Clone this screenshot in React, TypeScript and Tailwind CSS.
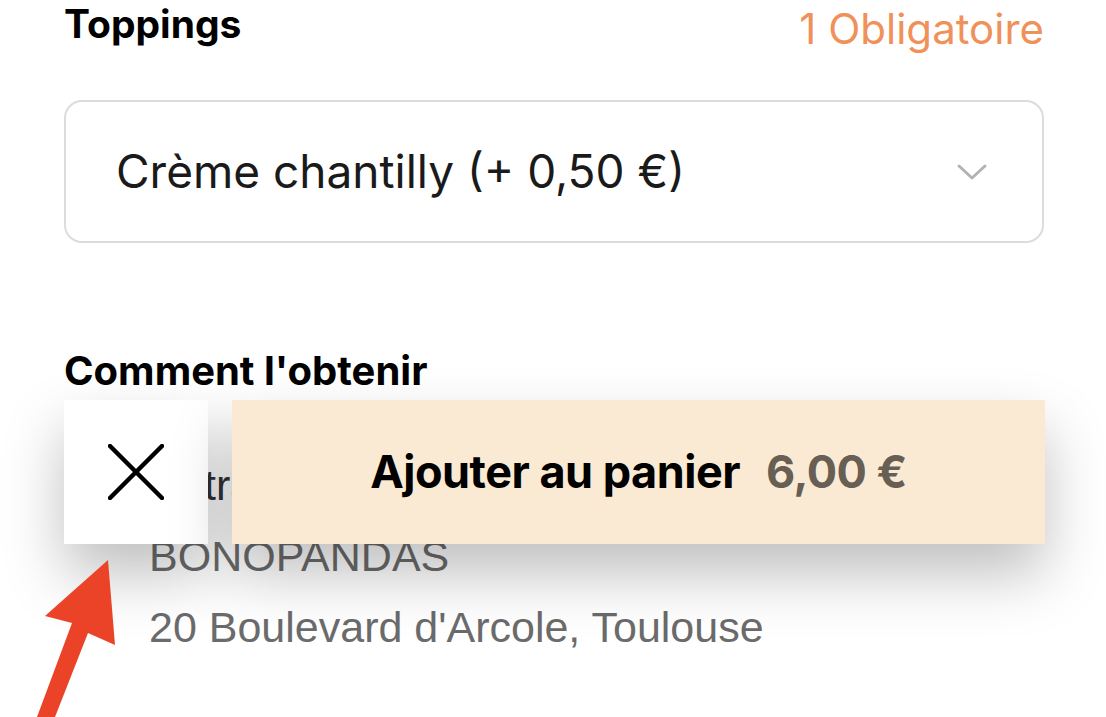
import React from "react";

const Chevron = () => (
  <svg width="32" height="20" viewBox="0 0 32 20" fill="none" stroke="#b3b3b3" strokeWidth="3" strokeLinecap="round" strokeLinejoin="round">
    <path d="M3 4 L16 16 L29 4" />
  </svg>
);

const CloseIcon = () => (
  <svg width="56" height="56" viewBox="0 0 56 56" fill="none" stroke="#000" strokeWidth="4.5" strokeLinecap="round">
    <path d="M2 2 L54 54 M54 2 L2 54" />
  </svg>
);

const Arrow = () => (
  <svg width="130" height="170" viewBox="0 0 130 170" className="absolute left-0 top-[550px]">
    <polygon points="108,10 45,66 72,73 37,167 55,167 88,83 115,95" fill="#ea4328" />
  </svg>
);

export default function App() {
  return (
    <div className="relative h-[717px] w-[1106px] overflow-hidden bg-white">
      <div className="flex flex-col pl-[64px] pr-[62px]" style={{ fontFamily: "Inter, sans-serif" }}>
        <div className="flex h-[48px] items-start justify-between">
          <h2 className="text-[39px] font-bold leading-[48px] text-black">Toppings</h2>
          <span className="mt-[5px] text-[42px] leading-[48px] text-[#f0915a]">1 Obligatoire</span>
        </div>
        <div className="mt-[52px] flex h-[143px] items-center justify-between rounded-[18px] border-[2.5px] border-[#dcdcdc] pl-[50px] pr-[54px]">
          <span className="text-[46px] text-[#1a1a1a]">Crème chantilly (+ 0,50 €)</span>
          <Chevron />
        </div>
        <h2 className="mt-[104px] text-[40px] font-bold leading-[48px] text-black">Comment l'obtenir</h2>
        <div className="mt-[55px] flex flex-col pl-[85px]" style={{ fontFamily: "'Liberation Sans', sans-serif" }}>
          <span className="text-[43px] leading-[71px] text-[#333]">Retrait</span>
          <span className="text-[43px] leading-[71px] text-[#6b6b6b]">BONOPANDAS</span>
          <span className="text-[43px] leading-[71px] text-[#6b6b6b]">20 Boulevard d'Arcole, Toulouse</span>
        </div>
      </div>

      <div className="absolute left-[64px] top-[400px] flex h-[144px] w-[981px] gap-[24px]">
        <button className="flex h-[144px] w-[144px] items-center justify-center bg-white shadow-[0_30px_60px_rgba(0,0,0,0.25)]">
          <CloseIcon />
        </button>
        <button className="flex flex-1 items-center justify-center gap-[26px] bg-[#fbead3] shadow-[0_30px_60px_rgba(0,0,0,0.25)]" style={{ fontFamily: "Inter, sans-serif" }}>
          <span className="text-[45px] font-bold tracking-[-0.5px] text-black">Ajouter au panier</span>
          <span className="text-[45px] font-bold tracking-[-0.5px] text-[#675e54]">6,00 €</span>
        </button>
      </div>

      <Arrow />
    </div>
  );
}
